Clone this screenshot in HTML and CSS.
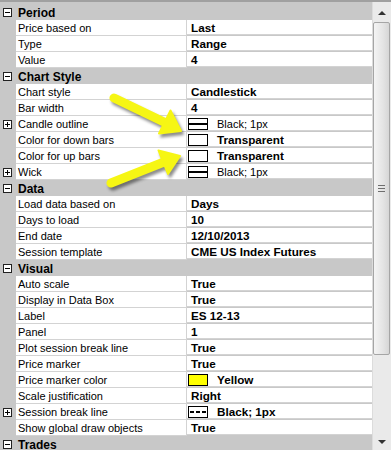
FILE: index.html
```html
<!DOCTYPE html>
<html lang="en">
<head>
    <meta charset="UTF-8">
    <title>Chart Properties</title>
    <link rel="stylesheet" href="styles.css">
</head>
<body>
    <div class="panel">
        <div class="list">
            <div class="cat"><span class="box"></span><span class="cat-name">Period</span></div>
            <div class="row"><span class="gut"></span><span class="name">Price based on</span><span class="val">Last</span></div>
            <div class="row"><span class="gut"></span><span class="name">Type</span><span class="val">Range</span></div>
            <div class="row"><span class="gut"></span><span class="name">Value</span><span class="val">4</span></div>

            <div class="cat"><span class="box"></span><span class="cat-name">Chart Style</span></div>
            <div class="row"><span class="gut"></span><span class="name">Chart style</span><span class="val">Candlestick</span></div>
            <div class="row"><span class="gut"></span><span class="name">Bar width</span><span class="val">4</span></div>
            <div class="row"><span class="gut"><span class="box plus"></span></span><span class="name">Candle outline</span><span class="val"><span class="swatch solid"></span><span class="plain">Black; 1px</span></span></div>
            <div class="row"><span class="gut"></span><span class="name">Color for down bars</span><span class="val"><span class="swatch"></span>Transparent</span></div>
            <div class="row"><span class="gut"></span><span class="name">Color for up bars</span><span class="val"><span class="swatch"></span>Transparent</span></div>
            <div class="row"><span class="gut"><span class="box plus"></span></span><span class="name">Wick</span><span class="val"><span class="swatch solid"></span><span class="plain">Black; 1px</span></span></div>

            <div class="cat"><span class="box"></span><span class="cat-name">Data</span></div>
            <div class="row"><span class="gut"></span><span class="name">Load data based on</span><span class="val">Days</span></div>
            <div class="row"><span class="gut"></span><span class="name">Days to load</span><span class="val">10</span></div>
            <div class="row"><span class="gut"></span><span class="name">End date</span><span class="val">12/10/2013</span></div>
            <div class="row"><span class="gut"></span><span class="name">Session template</span><span class="val">CME US Index Futures</span></div>

            <div class="cat"><span class="box"></span><span class="cat-name">Visual</span></div>
            <div class="row"><span class="gut"></span><span class="name">Auto scale</span><span class="val">True</span></div>
            <div class="row"><span class="gut"></span><span class="name">Display in Data Box</span><span class="val">True</span></div>
            <div class="row"><span class="gut"></span><span class="name">Label</span><span class="val">ES 12-13</span></div>
            <div class="row"><span class="gut"></span><span class="name">Panel</span><span class="val">1</span></div>
            <div class="row"><span class="gut"></span><span class="name">Plot session break line</span><span class="val">True</span></div>
            <div class="row"><span class="gut"></span><span class="name">Price marker</span><span class="val">True</span></div>
            <div class="row"><span class="gut"></span><span class="name">Price marker color</span><span class="val"><span class="swatch yellow"></span>Yellow</span></div>
            <div class="row"><span class="gut"></span><span class="name">Scale justification</span><span class="val">Right</span></div>
            <div class="row"><span class="gut"><span class="box plus"></span></span><span class="name">Session break line</span><span class="val"><span class="swatch dashed"></span>Black; 1px</span></div>
            <div class="row"><span class="gut"></span><span class="name">Show global draw objects</span><span class="val">True</span></div>

            <div class="cat"><span class="box"></span><span class="cat-name">Trades</span></div>
        </div>

        <div class="scroll">
            <div class="sb-btn"><span class="tri up"></span></div>
            <div class="thumb"><span class="grip"></span></div>
            <div class="track"></div>
            <div class="sb-btn"><span class="tri down"></span></div>
        </div>

        <!-- callout arrows drawn over the grid -->
        <svg class="arrows" width="391" height="450" viewBox="0 0 391 450">
            <g class="arrow">
                <line x1="114" y1="98" x2="166" y2="123" />
                <polygon points="181,131 159,133.5 170.5,110.5" />
            </g>
            <g class="arrow">
                <line x1="111" y1="183" x2="164" y2="162" />
                <polygon points="180,156 168,174 158.5,150.5" />
            </g>
        </svg>
    </div>
</body>
</html>
```

FILE: styles.css
```css
body {
    margin: 0;
    font-family: 'Liberation Sans', Arial, sans-serif;
    font-size: 11px;
    color: #000;
}

.panel {
    position: relative;
    display: flex;
    width: 391px;
    height: 450px;
    box-sizing: border-box;
    border-top: 2px solid #a0a0a0;
    background: #c8c8c8;
    overflow: hidden;
}

.list {
    width: 372px;
    padding-top: 2px;
}

.cat {
    display: flex;
    align-items: center;
    height: 16px;
    padding-top: 1px;
    box-sizing: border-box;
}
.cat .box {
    margin-left: 3px;
}
.cat-name {
    margin-left: 6px;
    font-weight: bold;
    font-size: 12px;
}

.row {
    display: grid;
    grid-template-columns: 16px 171px 1fr;
    height: 16px;
}
.gut {
    display: flex;
    align-items: center;
}
.gut .box {
    margin-left: 3px;
}
.name {
    background: #fff;
    border-bottom: 1px solid #d3d3d3;
    border-right: 1px solid #d3d3d3;
    padding: 1px 0 0 2px;
    line-height: 14px;
    white-space: nowrap;
}
.val {
    display: flex;
    align-items: center;
    background: #fff;
    border-bottom: 1px solid #d3d3d3;
    padding: 1px 0 0 4px;
    height: 15px;
    box-sizing: border-box;
    font-weight: bold;
    font-size: 11.7px;
    white-space: nowrap;
}
.plain {
    font-weight: normal;
    font-size: 11px;
}

/* expand / collapse boxes */
.box {
    position: relative;
    width: 9px;
    height: 9px;
    box-sizing: border-box;
    border: 1px solid #222;
    background: #fff;
}
.box::before {
    content: "";
    position: absolute;
    left: 1px;
    top: 3px;
    width: 5px;
    height: 1px;
    background: #000;
}
.box.plus::after {
    content: "";
    position: absolute;
    left: 3px;
    top: 1px;
    width: 1px;
    height: 5px;
    background: #000;
}

/* colour / stroke swatches */
.swatch {
    position: relative;
    width: 20px;
    height: 12px;
    box-sizing: border-box;
    border: 1px solid #000;
    background: #fff;
    margin-left: -3px;
    margin-right: 9px;
}
.swatch.solid::before {
    content: "";
    position: absolute;
    left: 0;
    right: 0;
    top: 4px;
    height: 2px;
    background: #000;
}
.swatch.dashed::before {
    content: "";
    position: absolute;
    left: 1px;
    right: 0;
    top: 4px;
    height: 2px;
    background: repeating-linear-gradient(to right, #000 0 4px, transparent 4px 6px);
}
.swatch.yellow {
    background: #ffff00;
}

/* scrollbar */
.scroll {
    display: flex;
    flex-direction: column;
    width: 19px;
    padding-top: 2px;
    background: #eaeaea;
    border-left: 1px solid #dcdcdc;
    box-sizing: border-box;
}
.sb-btn {
    display: flex;
    align-items: center;
    justify-content: center;
    height: 17px;
}
.tri {
    width: 0;
    height: 0;
    border-left: 4px solid transparent;
    border-right: 4px solid transparent;
}
.tri.up {
    border-bottom: 4px solid #333;
}
.tri.down {
    border-top: 4px solid #333;
}
.thumb {
    display: flex;
    align-items: center;
    justify-content: center;
    height: 331px;
    margin: 1px 1px 0 0;
    border: 1px solid #a5a5a5;
    border-radius: 2px;
    background: linear-gradient(to right, #f4f4f4, #e4e4e4 60%, #d6d6d6);
}
.grip {
    width: 7px;
    height: 7px;
    background: repeating-linear-gradient(to bottom, #6e6e6e 0 1px, transparent 1px 3px);
}
.track {
    flex: 1;
}

/* yellow callout arrows */
.arrows {
    position: absolute;
    left: 0;
    top: -2px;
    pointer-events: none;
}
.arrow {
    filter: drop-shadow(2px 3px 1.5px rgba(0, 0, 0, 0.45));
}
.arrow line {
    stroke: #f6f614;
    stroke-width: 9;
    stroke-linecap: round;
}
.arrow polygon {
    fill: #f6f614;
    stroke: #f6f614;
    stroke-width: 2;
    stroke-linejoin: round;
}
```
